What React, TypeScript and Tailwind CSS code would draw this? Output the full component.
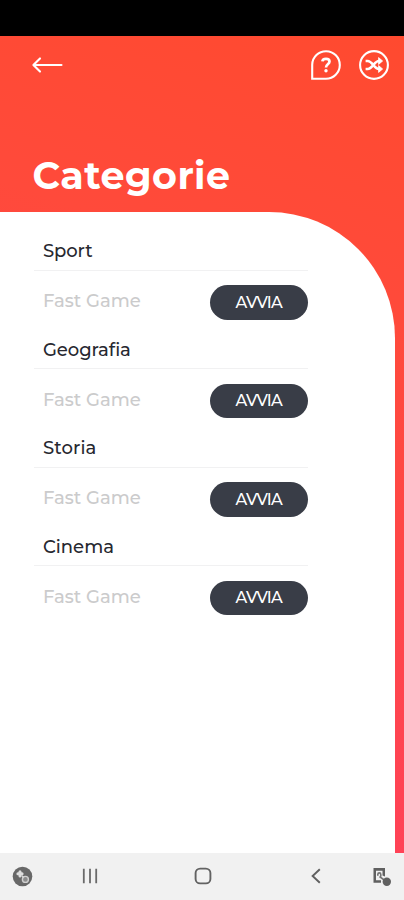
type Category = { name: string; tracking: string };

const categories: Category[] = [
  { name: "Sport", tracking: "tracking-[-0.1px]" },
  { name: "Geografia", tracking: "tracking-[-0.05px]" },
  { name: "Storia", tracking: "tracking-[0.1px]" },
  { name: "Cinema", tracking: "tracking-[0px]" },
];

function BackIcon() {
  return (
    <svg className="mb-[1px]" width="32" height="18" viewBox="0 0 32 18" fill="none" stroke="white" strokeWidth="2.1" strokeLinecap="round" strokeLinejoin="round">
      <path d="M30.5 9H3M9 2.4 2.4 9 9 15.6" />
    </svg>
  );
}

function HelpIcon() {
  return (
    <svg width="32" height="32" viewBox="0 0 32 32" fill="none" stroke="white" strokeWidth="2.1">
      <path d="M2.2 29.8V15.7A13.8 13.8 0 1 1 16 29.8Z" />
      <path d="M12.4 12.4C12.6 8.9 19.5 8.9 19.5 12.5C19.5 15.3 16 15.2 16 18.4" strokeWidth="2.7" />
      <circle cx="16" cy="21.8" r="1.7" fill="white" stroke="none" />
    </svg>
  );
}

function ShuffleIcon() {
  return (
    <svg width="32" height="32" viewBox="0 0 32 32" fill="none" stroke="white" strokeWidth="2.1">
      <circle cx="16" cy="16" r="13.9" />
      <path d="M7.6 12h2c5 0 6.4 8 11.4 8h1M7.6 20h2c5 0 6.4-8 11.4-8h1" strokeWidth="2.7" />
      <path d="M20.6 8.6 24.6 12l-4 3.4zM20.6 16.6l4 3.4-4 3.4z" fill="white" stroke="white" strokeWidth="0.8" strokeLinejoin="round" />
    </svg>
  );
}

function Row({ name, tracking }: Category) {
  return (
    <section className="h-[98.5px]">
      <h2 className={`flex h-[38.5px] items-center border-b border-[#f1f1f2] pt-[2px] pl-[9px] text-[18px] font-medium text-[#272830] ${tracking}`}>
        {name}
      </h2>
      <div className="mt-[14.5px] flex h-[34.5px] items-center justify-between pl-[9px]">
        <span className="pb-[1px] text-[18px] font-medium tracking-[-0.02px] text-[#cbcbcc]">Fast Game</span>
        <button className="flex h-full w-[98.5px] items-center justify-center rounded-full bg-[#393d47] pt-[1px] text-[16px] font-medium tracking-[-0.8px] text-white">
          AVVIA
        </button>
      </div>
    </section>
  );
}

export default function App() {
  return (
    <div className="flex h-[900px] w-[404px] flex-col overflow-hidden bg-black pt-[35.5px] font-['Montserrat',Inter,sans-serif]">
      <main className="flex min-h-0 flex-1 flex-col bg-[linear-gradient(200deg,#ff4a2f_0%,#ff4a3b_30%,#ff405e_100%)]">
        <header className="h-[176px] shrink-0 pt-[13.5px]">
          <nav className="flex items-center pl-[31px] pr-[14px]">
            <BackIcon />
            <div className="ml-auto flex gap-4">
              <HelpIcon />
              <ShuffleIcon />
            </div>
          </nav>
          <h1 className="mt-[70.5px] pl-[32.5px] text-[38px] leading-[48px] font-bold tracking-[0.45px] text-white">Categorie</h1>
        </header>
        <div className="mr-[9px] flex-1 rounded-tr-[126px] bg-white pt-[20.5px] pl-[34px]">
          <div className="w-[274px]">
            {categories.map((c) => (
              <Row key={c.name} {...c} />
            ))}
          </div>
        </div>
      </main>
      <footer className="flex h-[47px] shrink-0 items-center bg-[#f1f1f1] pb-[1px] pl-[12px]">
        <svg className="mt-[1px]" width="21" height="21" viewBox="0 0 21 21">
          <circle cx="10.5" cy="10.5" r="9.8" fill="#686868" />
          <path d="M5.9 7.8h4.2M8 5.7v4.2" stroke="#dedede" strokeWidth="3" strokeLinecap="round" />
          <circle cx="13.4" cy="13.4" r="3" fill="#8c8c8c" stroke="#d0d0d0" strokeWidth="1.4" />
          <path d="M9.6 9.6l2 2" stroke="#d8d8d8" strokeWidth="1.4" />
        </svg>
        <svg className="ml-[48px]" width="18" height="18" viewBox="0 0 18 18" stroke="#6a6a6a" strokeWidth="1.8">
          <path d="M2.8 1.8v14.4M9 1.8v14.4M15.2 1.8v14.4" />
        </svg>
        <svg className="ml-[95px]" width="18" height="18" viewBox="0 0 18 18" fill="none" stroke="#626262" strokeWidth="1.9">
          <rect x="1.6" y="1.6" width="14.8" height="14.8" rx="4.5" />
        </svg>
        <svg className="ml-[98px]" width="12" height="18" viewBox="0 0 12 18" fill="none" stroke="#606060" strokeWidth="1.9">
          <path d="M9.8 2.2 2.6 9l7.2 6.8" />
        </svg>
        <svg className="mt-[2px] ml-[50px]" width="20" height="20" viewBox="0 0 20 20">
          <path d="M1.5 1H13v8.5l-2.5-1V3.8H4v9.4h5v2.6H1.5z" fill="#606060" />
          <path d="M5.8 8.8V7.4a1.5 1.5 0 0 1 3 0v2M7.5 9.5l5.5 4.2" stroke="#737373" strokeWidth="1.6" fill="none" />
          <circle cx="14.8" cy="14.8" r="4.2" fill="#606060" />
        </svg>
      </footer>
    </div>
  );
}
